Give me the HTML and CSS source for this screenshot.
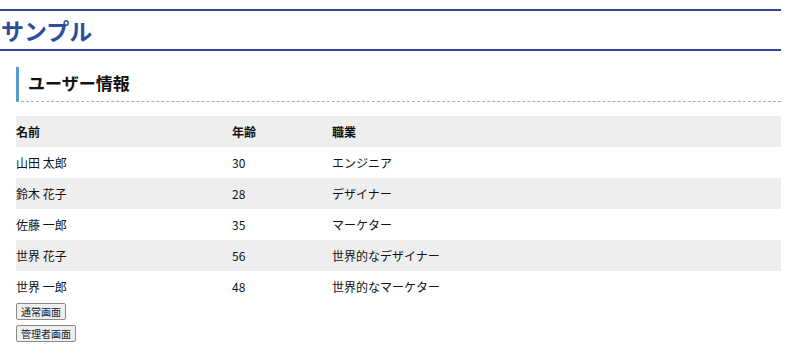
FILE: index.html
```html
<!DOCTYPE html>
<html lang="ja">
<head>
    <meta charset="UTF-8">
    <meta name="viewport" content="width=device-width, initial-scale=1.0">
    <title>サンプル</title>
    <link rel="stylesheet" href="styles.css">
</head>
<body>
    <div class="page">
        <h1 class="page-title">サンプル</h1>
        <div class="content">
            <h2 class="section-title">ユーザー情報</h2>
            <table class="user-table">
                <thead>
                    <tr>
                        <th class="col-name">名前</th>
                        <th class="col-age">年齢</th>
                        <th>職業</th>
                    </tr>
                </thead>
                <tbody>
                    <tr><td>山田 太郎</td><td>30</td><td>エンジニア</td></tr>
                    <tr><td>鈴木 花子</td><td>28</td><td>デザイナー</td></tr>
                    <tr><td>佐藤 一郎</td><td>35</td><td>マーケター</td></tr>
                    <tr><td>世界 花子</td><td>56</td><td>世界的なデザイナー</td></tr>
                    <tr><td>世界 一郎</td><td>48</td><td>世界的なマーケター</td></tr>
                </tbody>
            </table>
            <div class="actions">
                <button type="button" class="btn">通常画面</button>
                <button type="button" class="btn">管理者画面</button>
            </div>
        </div>
    </div>
</body>
</html>
```

FILE: styles.css
```css
body {
    margin: 0;
    font-family: "Noto Sans CJK JP", "Noto Sans", sans-serif;
    color: #111;
    background: #fff;
}
.page {
    width: 781px;
    padding-top: 9px;
}
.page-title {
    margin: 0;
    height: 38px;
    line-height: 38px;
    padding-left: 1px;
    font-size: 23px;
    font-weight: bold;
    color: #2b4d9e;
    border-top: 2px solid #2a4799;
    border-bottom: 2px solid #2a4799;
}
.content {
    padding-left: 16px;
}
.section-title {
    margin: 16px 0 14px;
    padding: 0 0 0 9px;
    height: 34px;
    line-height: 32px;
    font-size: 17px;
    font-weight: bold;
    color: #111;
    border-left: 3px solid #5b9bc9;
    border-bottom: 1px dashed #aaa;
}
.user-table {
    width: 100%;
    border-collapse: collapse;
    font-size: 12px;
}
.user-table th,
.user-table td {
    height: 31px;
    padding: 0;
    text-align: left;
    vertical-align: middle;
}
.user-table th {
    font-weight: bold;
}
.user-table thead tr,
.user-table tbody tr:nth-child(even) {
    background: #eee;
}
.col-name {
    width: 216px;
}
.col-age {
    width: 100px;
}
.actions {
    display: flex;
    flex-direction: column;
    align-items: flex-start;
    gap: 5px;
    margin-top: 1px;
}
.btn {
    font-family: "Noto Sans CJK JP", sans-serif;
    font-size: 10px;
    line-height: 13px;
    padding: 1px 4px;
    color: #222;
    background: #efefef;
    border: 1px solid #8a8a8a;
    border-radius: 2px;
}
```
